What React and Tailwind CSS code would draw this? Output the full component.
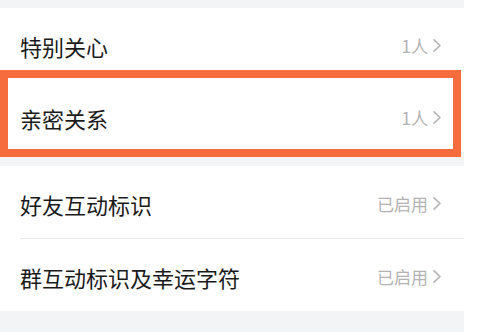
import React from "react";

const Chevron = () => (
  <svg width="10" height="15" viewBox="0 0 10 15" className="ml-[4px]">
    <path d="M2 1.8 L8 7.5 L2 13.2" fill="none" stroke="#b4b4b4" strokeWidth="1.6" strokeLinecap="round" strokeLinejoin="round" />
  </svg>
);

const Row = ({ label, value }) => (
  <div className="flex items-center justify-between h-[72px] pl-[20px] pr-[22px]">
    <span className="text-[22px] text-[#1a1a1a] leading-none pt-[3px]">{label}</span>
    <span className="flex items-center text-[17px] text-[#b3b3b3] leading-none pt-[3px]">
      {value}
      <Chevron />
    </span>
  </div>
);

export default function App() {
  return (
    <div
      className="relative w-[482px] h-[332px] bg-white overflow-hidden"
      style={{ fontFamily: '"Noto Sans CJK SC", "Noto Sans", sans-serif' }}
    >
      <div className="w-[464px] h-full bg-[#f3f4f6] pt-[8px] flex flex-col gap-[14px]">
        <div className="bg-white">
          <Row label="特别关心" value="1人" />
          <Row label="亲密关系" value="1人" />
        </div>
        <div className="bg-white">
          <Row label="好友互动标识" value="已启用" />
          <div className="ml-[20px] h-px bg-[#ececec]" />
          <Row label="群互动标识及幸运字符" value="已启用" />
        </div>
      </div>
      <div className="absolute left-0 top-[70px] w-[461px] h-[87px] border-[8px] border-[#f66c3c]" />
    </div>
  );
}
